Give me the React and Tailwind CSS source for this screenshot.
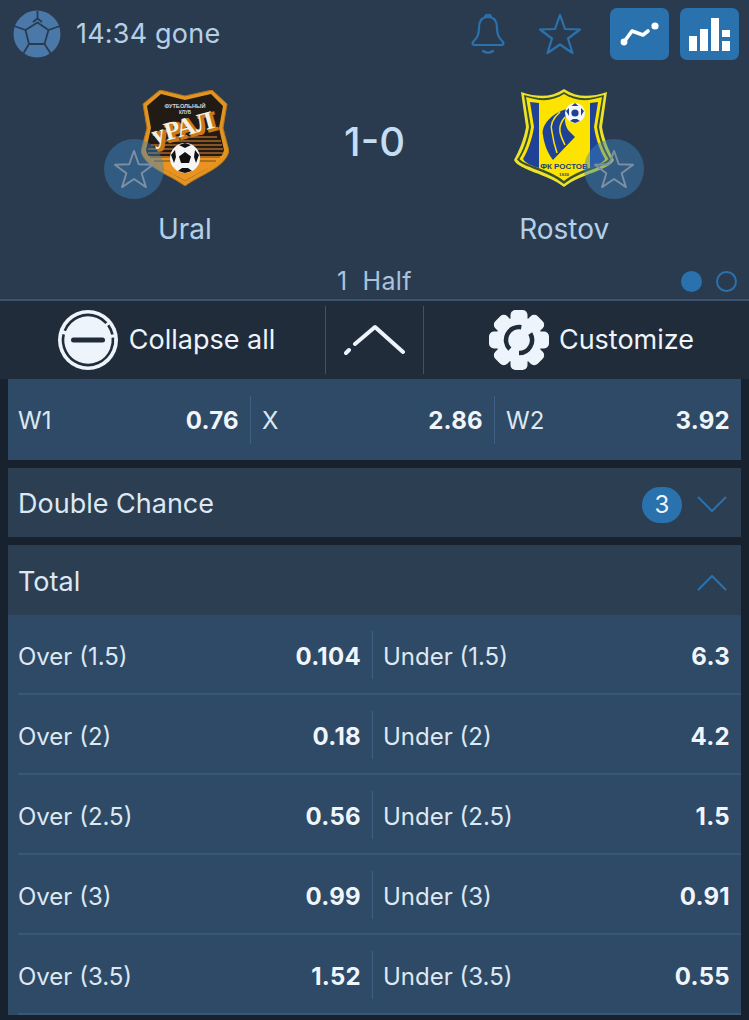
import React from 'react';

const totals = [
    ['Over (1.5)', '0.104', 'Under (1.5)', '6.3'],
    ['Over (2)', '0.18', 'Under (2)', '4.2'],
    ['Over (2.5)', '0.56', 'Under (2.5)', '1.5'],
    ['Over (3)', '0.99', 'Under (3)', '0.91'],
    ['Over (3.5)', '1.52', 'Under (3.5)', '0.55'],
];

function BallIcon() {
    return (
        <svg width="48" height="48" viewBox="0 0 48 48">
            <circle cx="24" cy="24" r="23.5" fill="#4a78a8" />
            <path d="M24.5 12.5 L35.5 20 L31.5 34 L16 34 L12.5 20 Z" fill="#4a78a8" stroke="#2a3b50" strokeWidth="1.8" strokeLinejoin="round" />
            <path d="M24.5 1 V8.5 M24.5 8.5 L20 12 M24.5 8.5 L29 12 M35.5 20 L47 16 M31.5 34 L38 44 M16 34 L10 44 M12.5 20 L1 16" fill="none" stroke="#2a3b50" strokeWidth="1.8" />
        </svg>
    );
}

function BellIcon() {
    return (
        <svg width="34" height="42" viewBox="0 0 34 42" fill="none" stroke="#2a72ae" strokeWidth="2.2" strokeLinecap="round" strokeLinejoin="round">
            <path d="M17 4 C10 4 8 9 8 15 C8 22 6 25 2 29 C1 31 2 32 4 32 H30 C32 32 33 31 32 29 C28 25 26 22 26 15 C26 9 24 4 17 4 Z" />
            <path d="M14 4 C14 1 20 1 20 4" />
            <path d="M12 38 C15 40 19 40 22 38" />
        </svg>
    );
}

function StarIcon({ size = 44, color = '#2a72ae', width = 2.2 }) {
    return (
        <svg width={size} height={size} viewBox="0 0 44 42" fill="none" stroke={color} strokeWidth={width} strokeLinejoin="round">
            <path d="M22 2 L27 16 L42 16.5 L30 25.5 L34.5 40 L22 31.5 L9.5 40 L14 25.5 L2 16.5 L17 16 Z" />
        </svg>
    );
}

function TrendIcon() {
    return (
        <svg width="40" height="28" viewBox="0 0 40 28" fill="none" stroke="#fff" strokeWidth="3.6" strokeLinecap="round" strokeLinejoin="round">
            <path d="M4 22 L12 11 L23 15 L28 11" />
            <circle cx="4" cy="22" r="3.4" fill="#fff" stroke="none" />
            <circle cx="35" cy="6" r="3.6" fill="#fff" stroke="none" />
        </svg>
    );
}

function BarsIcon() {
    return (
        <svg width="44" height="36" viewBox="0 0 44 36" fill="#fff">
            <rect x="1" y="20" width="8" height="15" />
            <rect x="12" y="13" width="8" height="22" />
            <rect x="23" y="2" width="8" height="33" />
            <rect x="34" y="14" width="8" height="7" />
            <rect x="34" y="25" width="8" height="10" />
        </svg>
    );
}

function UralLogo() {
    return (
        <svg width="88" height="96" viewBox="0 0 88 96">
            <path d="M19 0 L44 6 L71 0 L86 14 L82 38 L88 61 C84 78 60 84 44 96 C28 84 4 78 0 61 L6 38 L2 14 Z" fill="#e09422" stroke="#b87218" strokeWidth="1" />
            <path d="M20 4 L44 10 L70 4 L82 16 L78 38 L83 60 C80 74 58 82 44 91 C30 82 8 74 5 60 L10 38 L6 16 Z" fill="#211a15" />
            <path d="M6 66 H82 C76 76 58 82 44 91 C30 82 12 76 6 66 Z" fill="#ec931f" />
            <path d="M32 47 H76 M24 51 H80 M10 55 H81 M7 59 H82 M7 63 H82" stroke="#a8682a" strokeWidth="1.6" />
            <path d="M9 67 H79 M13 71 H75" stroke="#6b4a26" strokeWidth="1" />
            <text x="44" y="18" textAnchor="middle" fontSize="5.6" fontWeight="700" fill="#d8d8d8" fontFamily="Liberation Sans, sans-serif">ФУТБОЛЬНЫЙ</text>
            <text x="44" y="24" textAnchor="middle" fontSize="4.6" fontWeight="700" fill="#d8d8d8" fontFamily="Liberation Sans, sans-serif">КЛУБ</text>
            <g transform="translate(13 54) rotate(-15)" fontSize="26" fontWeight="700" fontFamily="Liberation Serif, serif">
                <text x="2" y="2" fill="#c87a1a" stroke="#c87a1a" strokeWidth="2.5">уРАЛ</text>
                <text x="0" y="0" fill="#f6f0e4">уРАЛ</text>
            </g>
            <circle cx="44" cy="68" r="15" fill="#f5f5f5" />
            <path d="M44 62 L50 66.5 L48 73 L40 73 L38 66.5 Z" fill="#111" />
            <path d="M44 53 L50 55 L44 58 L38 55 Z M30 65 L34 60 L35 67 L33 73 Z M58 65 L54 60 L53 67 L55 73 Z M37 81 L41 78 L47 78 L51 81 L44 83 Z" fill="#111" />
        </svg>
    );
}

function RostovLogo() {
    return (
        <svg width="100" height="98" viewBox="0 0 100 98">
            <path d="M7 3 C25 9 38 8 50 0 C62 8 75 9 93 3 L88 38 C90 50 95 62 100 71 C96 81 66 85 50 98 C34 85 4 81 0 71 C5 62 10 50 12 38 Z" fill="#ede32c" />
            <path d="M10 6 C27 11 39 10 50 3 C61 10 73 11 90 6 L85 38 C87 50 91 62 97 70.5 C92 78 66 82 50 95 C34 82 8 78 3 70.5 C9 62 13 50 15 38 Z" fill="#39512f" />
            <path d="M12 8 C28 13 39 12 50 5 C61 12 72 13 88 8 L83 38 C85 50 89 62 94.5 70 C90 76 65 80 50 92 C35 80 10 76 5.5 70 C11 62 15 50 17 38 Z" fill="#fde400" />
            <path d="M16 13 L25 14 V79 C18 77 11 74 9 70 C14 62 18 50 20 38 Z" fill="#1f4296" />
            <path d="M84 13 L76 14 V79 C82 77 89 74 91 70 C86 62 82 50 80 38 Z" fill="#1f4296" />
            <path d="M53 20 C38 24 27 36 29 46 C30 55 34 65 39 71 L61 48 L54 41 C52 38 51 34 51 31 Z" fill="#1f4296" />
            <path d="M46 23 C38 30 36 37 38 43 C39 50 41 58 43 64 M51 28 C47 33 45 38 46 43 C47 48 49 52 51 56" fill="none" stroke="#fde400" strokeWidth="1.5" />
            <circle cx="61" cy="24" r="10" fill="#f5f7fb" />
            <circle cx="61" cy="24" r="3.6" fill="#1f4296" />
            <path d="M61 14 L64.5 17 L57.5 17 Z M52 22 L55 19 L55 27 Z M70 22 L67 19 L67 27 Z M56 32 L59 30 L63 30 L66 32 L61 34 Z" fill="#1f4296" />
            <text x="50" y="80" textAnchor="middle" fontSize="8" fontWeight="700" fill="#1f3c80" fontFamily="Liberation Sans, sans-serif">ФК РОСТОВ</text>
            <text x="50" y="87" textAnchor="middle" fontSize="4.4" fontWeight="700" fill="#1f3c80" fontFamily="Liberation Sans, sans-serif">1930</text>
        </svg>
    );
}

function CollapseIcon() {
    return (
        <svg width="62" height="62" viewBox="0 0 62 62">
            <circle cx="31" cy="31" r="30" fill="#edf4fb" />
            <circle cx="31" cy="31" r="25" fill="none" stroke="#202c3a" strokeWidth="2.6" strokeDasharray="11 3 10 3 86 4 40" transform="rotate(-68 31 31)" />
            <rect x="14" y="28.5" width="34" height="5" rx="2.5" fill="#202c3a" />
        </svg>
    );
}

function GearIcon() {
    return (
        <svg width="62" height="62" viewBox="0 0 62 62">
            <g fill="#edf4fb">
                <circle cx="31" cy="31" r="23" />
                <rect x="22.5" y="1" width="17" height="60" rx="5" />
                <rect x="22.5" y="1" width="17" height="60" rx="5" transform="rotate(45 31 31)" />
                <rect x="22.5" y="1" width="17" height="60" rx="5" transform="rotate(90 31 31)" />
                <rect x="22.5" y="1" width="17" height="60" rx="5" transform="rotate(135 31 31)" />
            </g>
            <path d="M33.3 18.2 A13 13 0 0 0 21.8 40.2 M42.3 24.5 A13 13 0 0 1 31 44" fill="none" stroke="#202c3a" strokeWidth="4.5" />
        </svg>
    );
}

function Chevron({ up }) {
    return (
        <svg width="30" height="18" viewBox="0 0 30 18" fill="none" stroke="#2a72ae" strokeWidth="2">
            <path d={up ? 'M1 17 L15 3 L29 17' : 'M1 1 L15 15 L29 1'} />
        </svg>
    );
}

function OddCell({ label, value, divided, className = '' }) {
    return (
        <div className={`flex h-12 items-center justify-between pr-[11px] ${divided ? 'border-r border-[#3f6084]' : ''} ${className}`}>
            <span className="text-[24px] text-[#dde8f2]">{label}</span>
            <span className="text-[24px] font-bold tracking-[0.3px] text-[#f0f5fa]">{value}</span>
        </div>
    );
}

export default function App() {
    return (
        <div className="h-[1020px] w-[749px] overflow-hidden bg-[#17222e] font-[Inter,sans-serif]">
            {/* match header */}
            <header className="h-[301px] border-b-2 border-[#3c5370] bg-[#2a3b50]">
                <div className="flex h-[67px] items-center pl-[13px] pr-[10px] pt-[1px]">
                    <BallIcon />
                    <span className="ml-[15px] text-[27px] tracking-[0.2px] text-[#b4d0e8]">14:34 gone</span>
                    <div className="ml-auto flex items-center">
                        <BellIcon />
                        <div className="ml-[33px]"><StarIcon /></div>
                        <div className="ml-[28px] flex h-[52px] w-[59px] items-center justify-center rounded-[7px] bg-[#2a72ae]">
                            <TrendIcon />
                        </div>
                        <div className="ml-[11px] flex h-[52px] w-[59px] items-center justify-center rounded-[7px] bg-[#2a72ae]">
                            <BarsIcon />
                        </div>
                    </div>
                </div>

                <div className="grid grid-cols-3 px-[90px] pt-[22px]">
                    <div className="flex flex-col items-center">
                        <div className="relative flex h-[98px] items-center">
                            <UralLogo />
                            <div className="absolute left-[-37px] top-[50px] flex h-[60px] w-[60px] items-center justify-center rounded-full bg-[#3a82bd]/45">
                                <StarIcon size={42} color="#7d8fa3" width={2} />
                            </div>
                        </div>
                        <span className="mt-[26px] text-[28px] leading-8 text-[#b4d0e8]">Ural</span>
                    </div>
                    <div className="pt-[29px] text-center text-[40px] font-medium leading-[48px] text-[#c5ddf2]">1-0</div>
                    <div className="flex flex-col items-center">
                        <div className="relative flex h-[98px] items-center">
                            <RostovLogo />
                            <div className="absolute left-[70px] top-[50px] flex h-[60px] w-[60px] items-center justify-center rounded-full bg-[#3a82bd]/45">
                                <StarIcon size={42} color="#7d8fa3" width={2} />
                            </div>
                        </div>
                        <span className="mt-[26px] text-[28px] leading-8 text-[#b4d0e8]">Rostov</span>
                    </div>
                </div>

                <div className="mt-[20px] grid grid-cols-[1fr_auto_1fr] items-center px-[12px]">
                    <div />
                    <span className="whitespace-pre text-[25px] leading-8 tracking-[0.4px] text-[#a9c4dc]">1  Half</span>
                    <div className="flex justify-end gap-[14px]">
                        <span className="h-[21px] w-[21px] rounded-full bg-[#2a72ae]" />
                        <span className="h-[21px] w-[21px] rounded-full border-2 border-[#2a72ae]" />
                    </div>
                </div>
            </header>

            {/* toolbar */}
            <div className="flex h-[78px] items-center bg-[#202c3a] text-[#edf4fb]">
                <div className="flex h-[68px] w-[326px] items-center justify-center gap-[10px] border-r border-[#3c5370] pl-[7px]">
                    <CollapseIcon />
                    <span className="text-[27px]">Collapse all</span>
                </div>
                <div className="flex h-[68px] w-[98px] items-center justify-center border-r border-[#3c5370]">
                    <svg width="62" height="32" viewBox="0 0 62 32" fill="none" stroke="#edf4fb" strokeWidth="4" strokeLinecap="round" strokeLinejoin="round">
                        <path d="M2 29 L5 26 M11 20 L31 3 L59 28" />
                    </svg>
                </div>
                <div className="flex h-[68px] flex-1 items-center justify-center gap-[9px] pl-[9px]">
                    <GearIcon />
                    <span className="text-[27px]">Customize</span>
                </div>
            </div>

            {/* markets */}
            <main className="px-2">
                <section className="grid h-[81px] grid-cols-[243px_244px_1fr] items-center bg-[#2e4a66]">
                    <OddCell label="W1" value="0.76" divided className="pl-[10px] pt-[2px]" />
                    <OddCell label="X" value="2.86" divided className="pl-[11px] pt-[2px]" />
                    <OddCell label="W2" value="3.92" className="pl-[11px] pt-[2px]" />
                </section>

                <section className="mt-2 flex h-[69px] items-center justify-between bg-[#2c3e52] pl-[10px] pr-[14px] pt-[4px]">
                    <span className="text-[27px] text-[#dde8f2]">Double Chance</span>
                    <div className="flex items-center gap-[15px]">
                        <span className="flex h-9 w-10 items-center justify-center rounded-full bg-[#2a72ae] text-[24px] text-[#edf4fb]">3</span>
                        <Chevron />
                    </div>
                </section>

                <section className="mt-2">
                    <div className="flex h-[70px] items-center justify-between bg-[#2c3e52] pl-[10px] pr-[14px] pt-[4px]">
                        <span className="text-[27px] text-[#dde8f2]">Total</span>
                        <Chevron up />
                    </div>
                    <div className="bg-[#2e4a66]">
                        {totals.map(([overLabel, over, underLabel, under]) => (
                            <div key={overLabel} className="relative grid h-20 grid-cols-[365px_1fr] items-center">
                                <OddCell label={overLabel} value={over} divided className="pl-[10px] pt-[4px]" />
                                <OddCell label={underLabel} value={under} className="pl-[10px] pt-[4px]" />
                                <div className="absolute bottom-0 left-[10px] right-0 h-[2px] bg-[#38587a]" />
                            </div>
                        ))}
                    </div>
                </section>
            </main>
        </div>
    );
}
